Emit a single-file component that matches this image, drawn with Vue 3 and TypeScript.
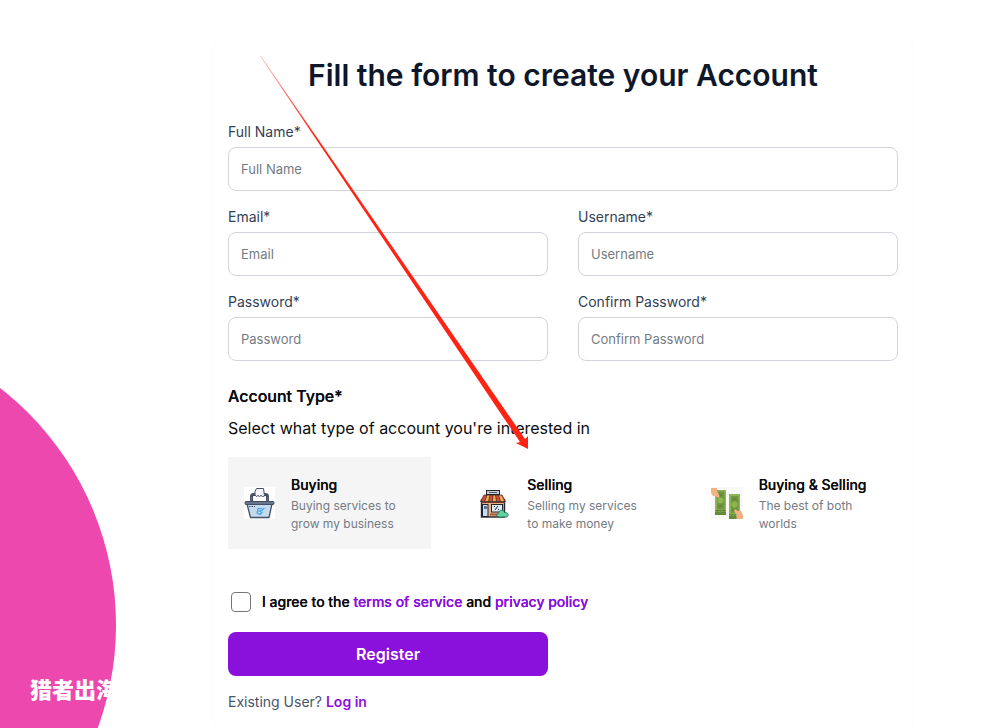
<script setup lang="ts">
import { reactive, ref } from 'vue'

interface Field {
  id: string
  label: string
  type: string
  wide?: boolean
}

interface AccountType {
  id: string
  title: string
  text: string
}

const fields: Field[] = [
  { id: 'fullName', label: 'Full Name', type: 'text', wide: true },
  { id: 'email', label: 'Email', type: 'email' },
  { id: 'username', label: 'Username', type: 'text' },
  { id: 'password', label: 'Password', type: 'password' },
  { id: 'confirm', label: 'Confirm Password', type: 'password' },
]

const accountTypes: AccountType[] = [
  { id: 'buying', title: 'Buying', text: 'Buying services to grow my business' },
  { id: 'selling', title: 'Selling', text: 'Selling my services to make money' },
  { id: 'both', title: 'Buying & Selling', text: 'The best of both worlds' },
]

const values = reactive<Record<string, string>>({
  fullName: '',
  email: '',
  username: '',
  password: '',
  confirm: '',
})
const selected = ref('buying')
const agreed = ref(false)
</script>

<template>
  <div class="page">
    <div class="blob"></div>
    <span class="watermark">猎者出海</span>

    <main class="card">
      <h1>Fill the form to create your Account</h1>

      <form @submit.prevent>
        <div class="fields">
          <div v-for="f in fields" :key="f.id" class="field" :class="{ wide: f.wide }">
            <label :for="f.id">{{ f.label }}*</label>
            <input :id="f.id" v-model="values[f.id]" :type="f.type" :placeholder="f.label" />
          </div>
        </div>

        <h2 id="type-title">Account Type*</h2>
        <p class="hint">Select what type of account you're interested in</p>

        <div class="types" role="radiogroup" aria-labelledby="type-title">
          <label v-for="t in accountTypes" :key="t.id" class="type" :class="{ active: selected === t.id }">
            <input v-model="selected" class="type-radio" type="radio" name="account-type" :value="t.id" />

            <svg v-if="t.id === 'buying'" class="icon" viewBox="0 0 31 32" aria-hidden="true">
              <rect width="31" height="32" fill="#fff" />
              <path d="M7.500 15V9.500Q7.500 7.500 9.500 7.500H21.500Q23.500 7.500 23.500 9.500V15" fill="none" stroke="#465064" stroke-width="3" />
              <path d="M7.500 14V10M23.500 14V10" stroke="#6b768b" stroke-width="1" />
              <path d="M12.500 1.500H19.500L20.500 9L18.500 9.500L17 8.500L15.500 9.500L14 8.500L12.500 9.500L11 8V4.500Z" fill="#f4f6fa" stroke="#465064" stroke-width="1" />
              <path d="M3 17H28L25 30.500H6.500Z" fill="#c6daee" stroke="#465064" stroke-width="1.300" />
              <rect x="1" y="14.500" width="29" height="3" rx="1" fill="#66748c" stroke="#465064" />
              <path d="M5 19.500H11" stroke="#465064" stroke-dasharray="1.500 1" />
              <path d="M18 21.500H14L13 26L16 27.500L18.500 25M14 24L18 23.500M16 25L20.500 21" fill="none" stroke="#37a5ee" stroke-width="1.100" />
            </svg>

            <svg v-else-if="t.id === 'selling'" class="icon" viewBox="0 0 34 32" aria-hidden="true">
              <rect x="9.500" y="3.500" width="13" height="4" fill="#c7ccd4" stroke="#23252d" />
              <path d="M12 5.500H20" stroke="#596072" stroke-width="1" />
              <rect x="4.500" y="13" width="23" height="17" fill="#e8b184" stroke="#23252d" stroke-width="1.400" />
              <path d="M7 8H25L28.500 14.500H3.500Z" fill="#dc4a35" />
              <path d="M10 8H13L11.500 14.500H7.500ZM16 8H18.500L19.500 14.500H15.500ZM21.500 8H24L27 14.500H23.500Z" fill="#f6b04a" />
              <path d="M7 8H25L28.500 14.500H3.500ZM10 8L7.500 14.500M13 8L11.500 14.500M16 8L15.500 14.500M18.500 8L19.500 14.500M21.500 8L23.500 14.500" fill="none" stroke="#23252d" stroke-width=".700" />
              <path d="M4 15.500H28" stroke="#6d3734" stroke-width="1" />
              <rect x="5.500" y="17.500" width="5.500" height="12" fill="#c5dcf2" stroke="#23252d" />
              <rect x="7" y="19" width="3" height="3" fill="#5e7796" />
              <rect x="14.500" y="17.500" width="11" height="7.500" fill="#dbeaf7" stroke="#23252d" />
              <path d="M18 23L21 19M17 19.500H18M21 22.500H22" stroke="#23252d" stroke-width="1" />
              <path d="M13 27.500H24" stroke="#a36242" stroke-width="2" />
              <path d="M22 30C19 30 19 26.500 21.500 26.500C21.500 22.500 27 22.500 27.500 25.500C32 25 32 30 29.500 30Z" fill="#5dd5a0" stroke="#2b5e50" stroke-width=".800" />
            </svg>

            <svg v-else class="icon" viewBox="0 0 32 32" aria-hidden="true">
              <rect width="32" height="32" fill="#f8f8f8" />
              <rect x="4" y="3" width="11" height="25" fill="#8fb552" />
              <rect x="6" y="4.500" width="7.500" height="18" fill="#719642" />
              <path d="M4 23H15V28H4Z" fill="#66893c" />
              <path d="M4 24.500H15" stroke="#85a94e" stroke-dasharray="2 1" />
              <circle cx="9.500" cy="13.500" r="3" fill="#8fb552" />
              <path d="M7.500 19H11.500M7.500 8H11.500" stroke="#557a34" />
              <rect x="18" y="7" width="11" height="25" fill="#8fb552" />
              <rect x="20" y="9" width="7.500" height="17" fill="#719642" />
              <path d="M18 27H29V32H18Z" fill="#66893c" />
              <path d="M18 28.500H29" stroke="#85a94e" stroke-dasharray="2 1" />
              <circle cx="23.500" cy="17.500" r="3" fill="#8fb552" />
              <path d="M21.500 12H25.500M21.500 23H25.500" stroke="#557a34" />
              <path d="M0 1H6V4L8.500 9L7.500 11L4.500 9L2 9L0 6Z" fill="#f4b183" />
              <path d="M32 32H25.500V28L23 24L24 22L27 24L30 24L32 28Z" fill="#f4b183" />
            </svg>

            <span class="type-body">
              <span class="type-title">{{ t.title }}</span>
              <span class="type-text">{{ t.text }}</span>
            </span>
          </label>
        </div>

        <div class="agree">
          <input id="agree" v-model="agreed" type="checkbox" />
          <label for="agree">I agree to the <a href="#terms">terms of service</a> and <a href="#privacy">privacy policy</a></label>
        </div>

        <button class="submit" type="submit">Register</button>
      </form>

      <p class="existing">Existing User? <a href="#login">Log in</a></p>
    </main>

    <svg class="arrow" width="270" height="396" viewBox="0 0 270 396" aria-hidden="true">
      <defs>
        <linearGradient id="fade" gradientUnits="userSpaceOnUse" x1="0" y1="0" x2="55" y2="80">
          <stop offset="0" stop-color="#ff2314" stop-opacity=".4" />
          <stop offset="1" stop-color="#ff2314" />
        </linearGradient>
      </defs>
      <path d="M0 0L.700 0L265 383L268 380L268 393L256 387L260 386Z" fill="url(#fade)" />
    </svg>
  </div>
</template>

<style>
body {
  margin: 0;
  background: #fff;
}
</style>

<style scoped>
.page {
  position: relative;
  box-sizing: border-box;
  height: 100vh;
  overflow: hidden;
  padding: 38px 84px 0 212px;
  font-family: Inter, "Noto Sans CJK SC", sans-serif;
  color: #0c0c0f;
}

.blob {
  position: absolute;
  left: -484px;
  top: 325px;
  width: 600px;
  height: 600px;
  border-radius: 50%;
  background: #ec48ad;
}

.watermark {
  position: absolute;
  left: 30px;
  top: 672px;
  color: #fff;
  font-family: "Noto Sans CJK SC", sans-serif;
  font-size: 22px;
  font-weight: 900;
  line-height: 32px;
}

.card {
  position: relative;
  border: 1px solid #fcfcfc;
  border-radius: 12px;
  padding: 18px 15px;
}

h1 {
  margin: 0 0 29px;
  text-align: center;
  font-size: 30px;
  font-weight: 600;
  line-height: 36px;
  color: #0f172a;
}

.fields {
  display: grid;
  grid-template-columns: 1fr 1fr;
  gap: 16px 30px;
}

.field {
  display: flex;
  flex-direction: column;
  gap: 5px;
}

.wide {
  grid-column: 1 / -1;
}

.field label {
  font-size: 14px;
  line-height: 20px;
  color: #334155;
}

.field input {
  box-sizing: border-box;
  width: 100%;
  height: 44px;
  border: 1px solid #d1d5db;
  border-radius: 8px;
  padding: 0 12px;
  background: #fff;
  font-family: inherit;
  font-size: 13px;
  color: #334155;
}

.field input::placeholder {
  color: #757b83;
  opacity: 1;
}

h2 {
  margin: 23px 0 8px;
  font-size: 16px;
  font-weight: 500;
  line-height: 24px;
  text-shadow: 0 0 0 currentColor;
}

.hint {
  margin: 0 0 17px;
  font-size: 16px;
  line-height: 24px;
}

.types {
  display: grid;
  grid-template-columns: repeat(3, 1fr);
  gap: 30px;
}

.type {
  position: relative;
  display: flex;
  align-items: center;
  gap: 16px;
  padding: 16px;
  cursor: pointer;
}

.active {
  background: #f5f5f5;
}

.type-radio {
  position: absolute;
  margin: 0;
  opacity: 0;
}

.icon {
  flex: none;
  height: 32px;
}

.type-body {
  display: flex;
  flex-direction: column;
}

.type-title {
  font-size: 14px;
  font-weight: 500;
  line-height: 24px;
  text-shadow: 0 0 0 currentColor;
}

.type-text {
  font-size: 12px;
  line-height: 18px;
  color: #757b83;
}

.agree {
  display: flex;
  align-items: center;
  gap: 11px;
  margin: 41px 0 18px;
  padding-left: 3px;
  font-size: 14px;
  font-weight: 500;
  line-height: 24px;
}

.agree label,
.agree a {
  text-shadow: 0 0 0 currentColor;
}

.agree input {
  appearance: none;
  box-sizing: border-box;
  width: 20px;
  height: 20px;
  margin: 0;
  border: 1px solid #767676;
  border-radius: 4px;
  background: #fff;
}

.agree input:checked {
  background: #8a10dc;
}

a {
  color: #8a10dc;
  text-decoration: none;
}

.submit {
  display: block;
  width: calc(50% - 15px);
  height: 44px;
  border: 0;
  border-radius: 8px;
  background: #8a10dc;
  color: #fff;
  font-family: inherit;
  font-size: 16px;
  font-weight: 600;
}

.existing {
  margin: 16px 0 0;
  font-size: 14px;
  line-height: 20px;
  color: #475569;
}

.existing a {
  font-weight: 600;
}

.arrow {
  position: absolute;
  left: 260px;
  top: 56px;
  pointer-events: none;
}
</style>
